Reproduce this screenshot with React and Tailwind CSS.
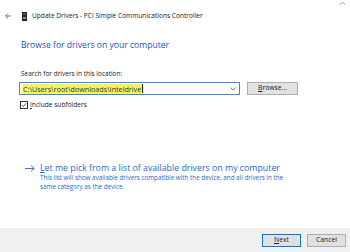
import React from "react";

export default function App() {
  const font = { fontFamily: '"Open Sans", "Noto Sans", sans-serif' };
  return (
    <div className="w-[350px] h-[252px] bg-white flex flex-col overflow-hidden text-black" style={font}>
      <div className="flex-1 relative">
        <svg width="7" height="5" viewBox="0 0 7 5" className="absolute right-[4px] top-[1px]">
          <path d="M0.5 4L3.5 1L6.5 4" fill="none" stroke="#888" strokeWidth="0.8" />
        </svg>
        {/* title bar */}
        <div className="flex items-center h-[20px] mt-[6px] pl-[5px]">
          <svg width="6" height="6" viewBox="0 0 6 6" className="mr-[11px]">
            <path d="M6 3H0.8M3 0.6L0.6 3L3 5.4" fill="none" stroke="#555" strokeWidth="0.8" />
          </svg>
          <svg width="5" height="9" viewBox="0 0 5 9" className="mr-[5px]">
            <rect x="0" y="0" width="5" height="9" fill="#222" />
            <rect x="1" y="5" width="3" height="2" fill="#3ec43e" />
            <rect x="1" y="1" width="3" height="2" fill="#555" />
          </svg>
          <span className="text-[6.6px] leading-none text-[#222]">Update Drivers - PCI Simple Communications Controller</span>
        </div>
        <div className="pl-[21px] mt-[14px]">
          <div className="text-[8.6px] leading-[10px] text-[#1f51b7]">Browse for drivers on your computer</div>
          <div className="text-[6.5px] leading-[10px] mt-[19px] text-[#222]">Search for drivers in this location:</div>
          <div className="flex items-center mt-[3px] ml-[-2px]">
            <div className="w-[221px] h-[13px] border border-[#3c8ad8] flex items-center pl-[2px] pr-[2px] relative">
              <span className="bg-[#f2f266] rounded-[3px] px-[1px] text-[7.2px] leading-[10px] text-[#333] flex items-center">
                C:\Users\root\downloads\inteldrive<span className="inline-block w-[1px] h-[9px] bg-[#222] ml-[1px]" />
              </span>
              <svg width="6" height="4" viewBox="0 0 6 4" className="ml-auto mr-[1px]">
                <path d="M0.5 0.5L3 3L5.5 0.5" fill="none" stroke="#555" strokeWidth="0.8" />
              </svg>
            </div>
            <div className="ml-[7px] w-[51px] h-[13px] bg-[#e1e1e1] border border-[#adadad] flex items-center justify-center text-[6.8px] leading-none text-[#222]">
              <span><span className="underline">B</span>rowse...</span>
            </div>
          </div>
          <div className="flex items-center h-[10px] mt-[5px] ml-[-1px]">
            <div className="w-[8px] h-[8px] border border-[#333] flex items-center justify-center bg-white">
              <svg width="6" height="6" viewBox="0 0 6 6">
                <path d="M0.8 3L2.4 4.6L5.2 1.2" fill="none" stroke="#333" strokeWidth="0.8" />
              </svg>
            </div>
            <span className="ml-[2px] text-[6.6px] leading-none text-[#222]"><span className="underline">I</span>nclude subfolders</span>
          </div>
        </div>
        <div className="flex mt-[53px] pl-[25px]">
          <svg width="10" height="7" viewBox="0 0 10 7" className="mt-[2px] mr-[5px]">
            <path d="M0 3.5H9.2M6 0.5L9.2 3.5L6 6.5" fill="none" stroke="#1c6bd1" strokeWidth="0.9" />
          </svg>
          <div>
            <div className="text-[8.8px] leading-[11px] text-[#1c6bd1]"><span className="underline">L</span>et me pick from a list of available drivers on my computer</div>
            <div className="text-[6.3px] leading-[9px] text-[#1c6bd1] mt-[-1px] w-[256px]">
              This list will show available drivers compatible with the device, and all drivers in the same category as the device.
            </div>
          </div>
        </div>
      </div>
      <div className="h-[24px] bg-[#f0f0f0] flex items-start justify-end pt-[6px] pr-[4px] gap-[6px]">
        <div className="w-[39px] h-[13px] bg-[#e1e1e1] border border-[#0078d7] flex items-center justify-center text-[6.8px] leading-none text-[#222]">
          <span><span className="underline">N</span>ext</span>
        </div>
        <div className="w-[39px] h-[13px] bg-[#e1e1e1] border border-[#adadad] flex items-center justify-center text-[6.8px] leading-none text-[#222]">
          Cancel
        </div>
      </div>
    </div>
  );
}
